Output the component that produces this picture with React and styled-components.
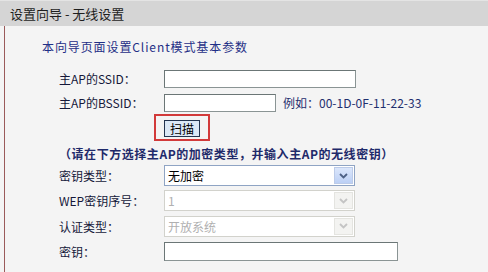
import React from "react";
import styled, { createGlobalStyle } from "styled-components";

const GlobalStyle = createGlobalStyle`
  html, body {
    margin: 0;
    padding: 0;
    background: #f4f4f4;
  }
  body {
    width: 488px;
    height: 272px;
    overflow: hidden;
    font-family: "Noto Sans CJK SC", "Noto Sans", sans-serif;
  }
`;

const Chevron = ({ color }) => (
  <svg width="9" height="6" viewBox="0 0 9 6">
    <path d="M1 1 L4.5 4.5 L8 1" fill="none" stroke={color} strokeWidth="1.8" />
  </svg>
);

const App = () => {
  return (
    <>
      <GlobalStyle />
      <Page>
        <Header>设置向导 - 无线设置</Header>
        <Panel>
          <Subtitle>本向导页面设置Client模式基本参数</Subtitle>
          <Form>
            <Row $h={25}>
              <Label>主AP的SSID：</Label>
              <Field>
                <TextInput $w={192} />
              </Field>
            </Row>
            <Row $h={23}>
              <Label>主AP的BSSID：</Label>
              <Field>
                <TextInput $w={112} />
                <Hint>例如：00-1D-0F-11-22-33</Hint>
              </Field>
            </Row>
            <Row $h={27}>
              <span />
              <Field>
                <Highlight>
                  <ScanButton>扫描</ScanButton>
                </Highlight>
              </Field>
            </Row>
            <Note>（请在下方选择主AP的加密类型，并输入主AP的无线密钥）</Note>
            <Row $h={25}>
              <Label>密钥类型：</Label>
              <Field>
                <SelectBox>
                  <SelectText>无加密</SelectText>
                  <ArrowBox>
                    <Chevron color="#4d6185" />
                  </ArrowBox>
                </SelectBox>
              </Field>
            </Row>
            <Row $h={25}>
              <Label>WEP密钥序号：</Label>
              <Field>
                <SelectBox $disabled>
                  <SelectText $disabled>1</SelectText>
                  <ArrowBox $disabled>
                    <Chevron color="#c4c4c4" />
                  </ArrowBox>
                </SelectBox>
              </Field>
            </Row>
            <Row $h={26}>
              <Label>认证类型：</Label>
              <Field>
                <SelectBox $disabled>
                  <SelectText $disabled>开放系统</SelectText>
                  <ArrowBox $disabled>
                    <Chevron color="#c4c4c4" />
                  </ArrowBox>
                </SelectBox>
              </Field>
            </Row>
            <Row $h={25}>
              <Label>密钥：</Label>
              <Field>
                <TextInput $w={234} $h={19} />
              </Field>
            </Row>
          </Form>
        </Panel>
      </Page>
    </>
  );
};

export default App;

const Page = styled.div`
  display: flex;
  flex-direction: column;
  width: 488px;
  height: 272px;
`;

const Header = styled.div`
  height: 25px;
  display: flex;
  align-items: center;
  padding-left: 10px;
  background: #d5d5d5;
  border-top: 1px solid #e4e4e4;
  font-size: 13px;
  color: #1e1e1e;
`;

const Panel = styled.div`
  flex: 1;
  margin-left: 4px;
  border-left: 1px solid #9a5a5a;
  background: #f4f4f4;
  padding-top: 12px;
`;

const Subtitle = styled.div`
  height: 18px;
  line-height: 18px;
  padding-left: 37px;
  font-size: 12px;
  letter-spacing: 0.9px;
  color: #1f2f86;
`;

const Form = styled.div`
  display: flex;
  flex-direction: column;
  padding-top: 10px;
  padding-left: 54px;
`;

const Row = styled.div`
  display: grid;
  grid-template-columns: 105px 1fr;
  align-items: center;
  height: ${(p) => p.$h}px;
`;

const Label = styled.span`
  font-size: 12px;
  color: #15183a;
  white-space: nowrap;
`;

const Field = styled.div`
  display: flex;
  align-items: center;
  gap: 7px;
`;

const TextInput = styled.div`
  box-sizing: border-box;
  width: ${(p) => p.$w}px;
  height: ${(p) => p.$h || 18}px;
  background: #ffffff;
  border: 1px solid #6b7676;
  border-right-color: #8a9494;
  border-bottom-color: #8a9494;
`;

const Hint = styled.span`
  font-size: 12px;
  color: #1f2f6e;
  white-space: nowrap;
`;

const Highlight = styled.div`
  display: flex;
  margin-left: -10px;
  padding: 4px 8px 2px 8px;
  border: 2px solid #d23a3a;
`;

const ScanButton = styled.button`
  box-sizing: border-box;
  width: 36px;
  height: 17px;
  padding: 0;
  display: flex;
  align-items: center;
  justify-content: center;
  background: #dbe8f6;
  border: 1px solid #23344f;
  font-family: "Noto Sans CJK SC", "Noto Sans", sans-serif;
  font-size: 12px;
  color: #000000;
`;

const Note = styled.div`
  margin-top: 4px;
  height: 18px;
  line-height: 18px;
  font-size: 12px;
  font-weight: bold;
  letter-spacing: 0.55px;
  color: #1f2a6a;
  white-space: nowrap;
`;

const SelectBox = styled.div`
  box-sizing: border-box;
  width: 191px;
  height: 21px;
  display: flex;
  align-items: stretch;
  padding: 1px;
  background: #ffffff;
  border: 1px solid ${(p) => (p.$disabled ? "#d2d2cc" : "#8fa4c4")};
`;

const SelectText = styled.span`
  flex: 1;
  display: flex;
  align-items: center;
  padding-left: 2px;
  font-size: 12px;
  color: ${(p) => (p.$disabled ? "#b0b0b0" : "#000000")};
`;

const ArrowBox = styled.span`
  width: 17px;
  display: flex;
  align-items: center;
  justify-content: center;
  background: ${(p) =>
    p.$disabled ? "#f3f3f1" : "linear-gradient(#dbe6fb, #bcd0f5)"};
  border: 1px solid ${(p) => (p.$disabled ? "#e4e4e0" : "#bccbe8")};
`;
